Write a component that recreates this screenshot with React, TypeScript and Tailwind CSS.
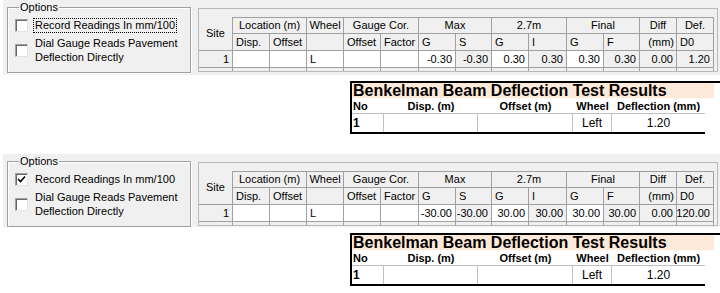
import React from 'react';

type PanelProps = {
  checked: boolean;
  focused: boolean;
  values: string[];
  greyHeight: string;
};

const CheckBox = ({ checked }: { checked: boolean }) => (
  <div className="w-[13px] h-[13px] shrink-0 bg-white border border-t-[#a0a0a0] border-l-[#a0a0a0] border-b-[#e3e3e3] border-r-[#e3e3e3] shadow-[inset_1px_1px_0_#696969] flex items-center justify-center">
    {checked && (
      <svg width="9" height="9" viewBox="0 0 9 9">
        <path d="M1 4 L3.5 6.5 L8 1.5" stroke="#000" strokeWidth="1.6" fill="none" />
      </svg>
    )}
  </div>
);

const Options = ({ checked, focused }: { checked: boolean; focused: boolean }) => (
  <fieldset className="w-[184px] h-[72px] border border-[#a0a0a0] shadow-[inset_1px_1px_0_#fff,1px_1px_0_#fff] pl-[7px] flex flex-col gap-[4px]">
    <legend className="ml-[4px] px-[1px] text-[11px] leading-[12px]">Options</legend>
    <div className="flex items-center gap-[6px] mt-[5px] h-[14px]">
      <CheckBox checked={checked} />
      <span
        className={
          focused
            ? 'text-[11px] leading-[13px] px-[1px] outline outline-1 outline-dotted outline-black'
            : 'text-[11px] leading-[13px] px-[1px]'
        }
      >
        Record Readings In mm/100
      </span>
    </div>
    <div className="flex items-center gap-[6px]">
      <CheckBox checked={false} />
      <span className="text-[11px] leading-[14px] px-[1px]">
        Dial Gauge Reads Pavement
        <br />
        Deflection Directly
      </span>
    </div>
  </fieldset>
);

const DataGrid = ({ values }: { values: string[] }) => {
  const h1 = 'border-r border-b border-t border-[#a0a0a0] flex items-center justify-center';
  const h2 = 'border-r border-b border-[#a0a0a0] flex items-center pl-[3px]';
  const white = 'border-r border-b border-[#a0a0a0] bg-white flex items-center justify-end pr-[3px]';
  const grey = 'border-r border-b border-[#a0a0a0] flex items-center justify-end pr-[3px]';
  const empty = 'border-r border-[#a0a0a0]';
  const whiteCols = [true, false, true, false, true, false, false, false];

  return (
    <div className="mt-[7px] w-[520px] h-[64px] border border-[#b9b9b9] overflow-hidden pt-[8px] text-[11px] leading-[13px] text-black">
      <div className="grid grid-cols-[34px_37px_37px_37px_37px_38px_37px_36px_37px_38px_37px_36px_37px_37px] grid-rows-[17px_17px_17px_17px]">
        <div className="row-span-2 border-r border-b border-[#a0a0a0] flex items-center justify-center">Site</div>
        <div className={`col-span-2 ${h1}`}>Location (m)</div>
        <div className={h1}>Wheel</div>
        <div className={`col-span-2 ${h1}`}>Gauge Cor.</div>
        <div className={`col-span-2 ${h1}`}>Max</div>
        <div className={`col-span-2 ${h1}`}>2.7m</div>
        <div className={`col-span-2 ${h1}`}>Final</div>
        <div className={h1}>Diff</div>
        <div className={h1}>Def.</div>

        <div className={h2}>Disp.</div>
        <div className={h2}>Offset</div>
        <div className={h2}></div>
        <div className={h2}>Offset</div>
        <div className={h2}>Factor</div>
        <div className={h2}>G</div>
        <div className={h2}>S</div>
        <div className={h2}>G</div>
        <div className={h2}>I</div>
        <div className={h2}>G</div>
        <div className={h2}>F</div>
        <div className="border-r border-b border-[#a0a0a0] flex items-center justify-end pr-[2px]">(mm)</div>
        <div className={h2}>D0</div>

        <div className={grey}>1</div>
        <div className={white}></div>
        <div className={white}></div>
        <div className="border-r border-b border-[#a0a0a0] bg-white flex items-center pl-[3px]">L</div>
        <div className={white}></div>
        <div className={white}></div>
        {values.map((v, i) => (
          <div key={i} className={whiteCols[i] ? white : grey}>
            {v}
          </div>
        ))}

        {Array.from({ length: 14 }).map((_, i) => (
          <div key={i} className={empty}></div>
        ))}
      </div>
    </div>
  );
};

const Report = () => (
  <div className="ml-[350px] mt-[6px] w-[370px] border-t-2 border-l-2 border-black font-['Liberation_Sans',Arial,sans-serif]">
    <div className="h-[15px] w-[362px] bg-[#fde9d9] font-bold text-[16px] leading-[16px] pl-[1px] whitespace-nowrap overflow-hidden">
      Benkelman Beam Deflection Test Results
    </div>
    <div className="w-[353px] border-b-2 border-black">
      <div className="grid grid-cols-[32px_94px_95px_39px_93px] h-[16px] border-b border-[#c0c0c0] text-[11px] leading-[16px] font-bold">
        <div className="pl-[1px]">No</div>
        <div className="text-center">Disp. (m)</div>
        <div className="text-center">Offset (m)</div>
        <div className="text-center">Wheel</div>
        <div className="text-center">Deflection (mm)</div>
      </div>
      <div className="grid grid-cols-[32px_94px_95px_39px_93px] h-[18px] text-[12px] leading-[18px]">
        <div className="pl-[1px] font-bold border-r border-[#c0c0c0]">1</div>
        <div className="border-r border-[#c0c0c0]"></div>
        <div className="border-r border-[#c0c0c0]"></div>
        <div className="text-center border-r border-[#c0c0c0]">Left</div>
        <div className="text-center">1.20</div>
      </div>
    </div>
  </div>
);

const Panel = ({ checked, focused, values, greyHeight }: PanelProps) => (
  <section>
    <div className={`ml-[3px] ${greyHeight} bg-[#f0f0f0] flex items-start pl-[4px] pt-[1px] gap-[7px]`}>
      <Options checked={checked} focused={focused} />
      <DataGrid values={values} />
    </div>
    <Report />
  </section>
);

export default function App() {
  return (
    <div className="w-[720px] h-[293px] bg-white overflow-hidden text-black font-['Liberation_Sans',Arial,sans-serif]">
      <Panel
        checked={false}
        focused={true}
        values={['-0.30', '-0.30', '0.30', '0.30', '0.30', '0.30', '0.00', '1.20']}
        greyHeight="h-[75px]"
      />
      <div className="h-[20px]" />
      <Panel
        checked={true}
        focused={false}
        values={['-30.00', '-30.00', '30.00', '30.00', '30.00', '30.00', '0.00', '120.00']}
        greyHeight="h-[73px]"
      />
    </div>
  );
}
